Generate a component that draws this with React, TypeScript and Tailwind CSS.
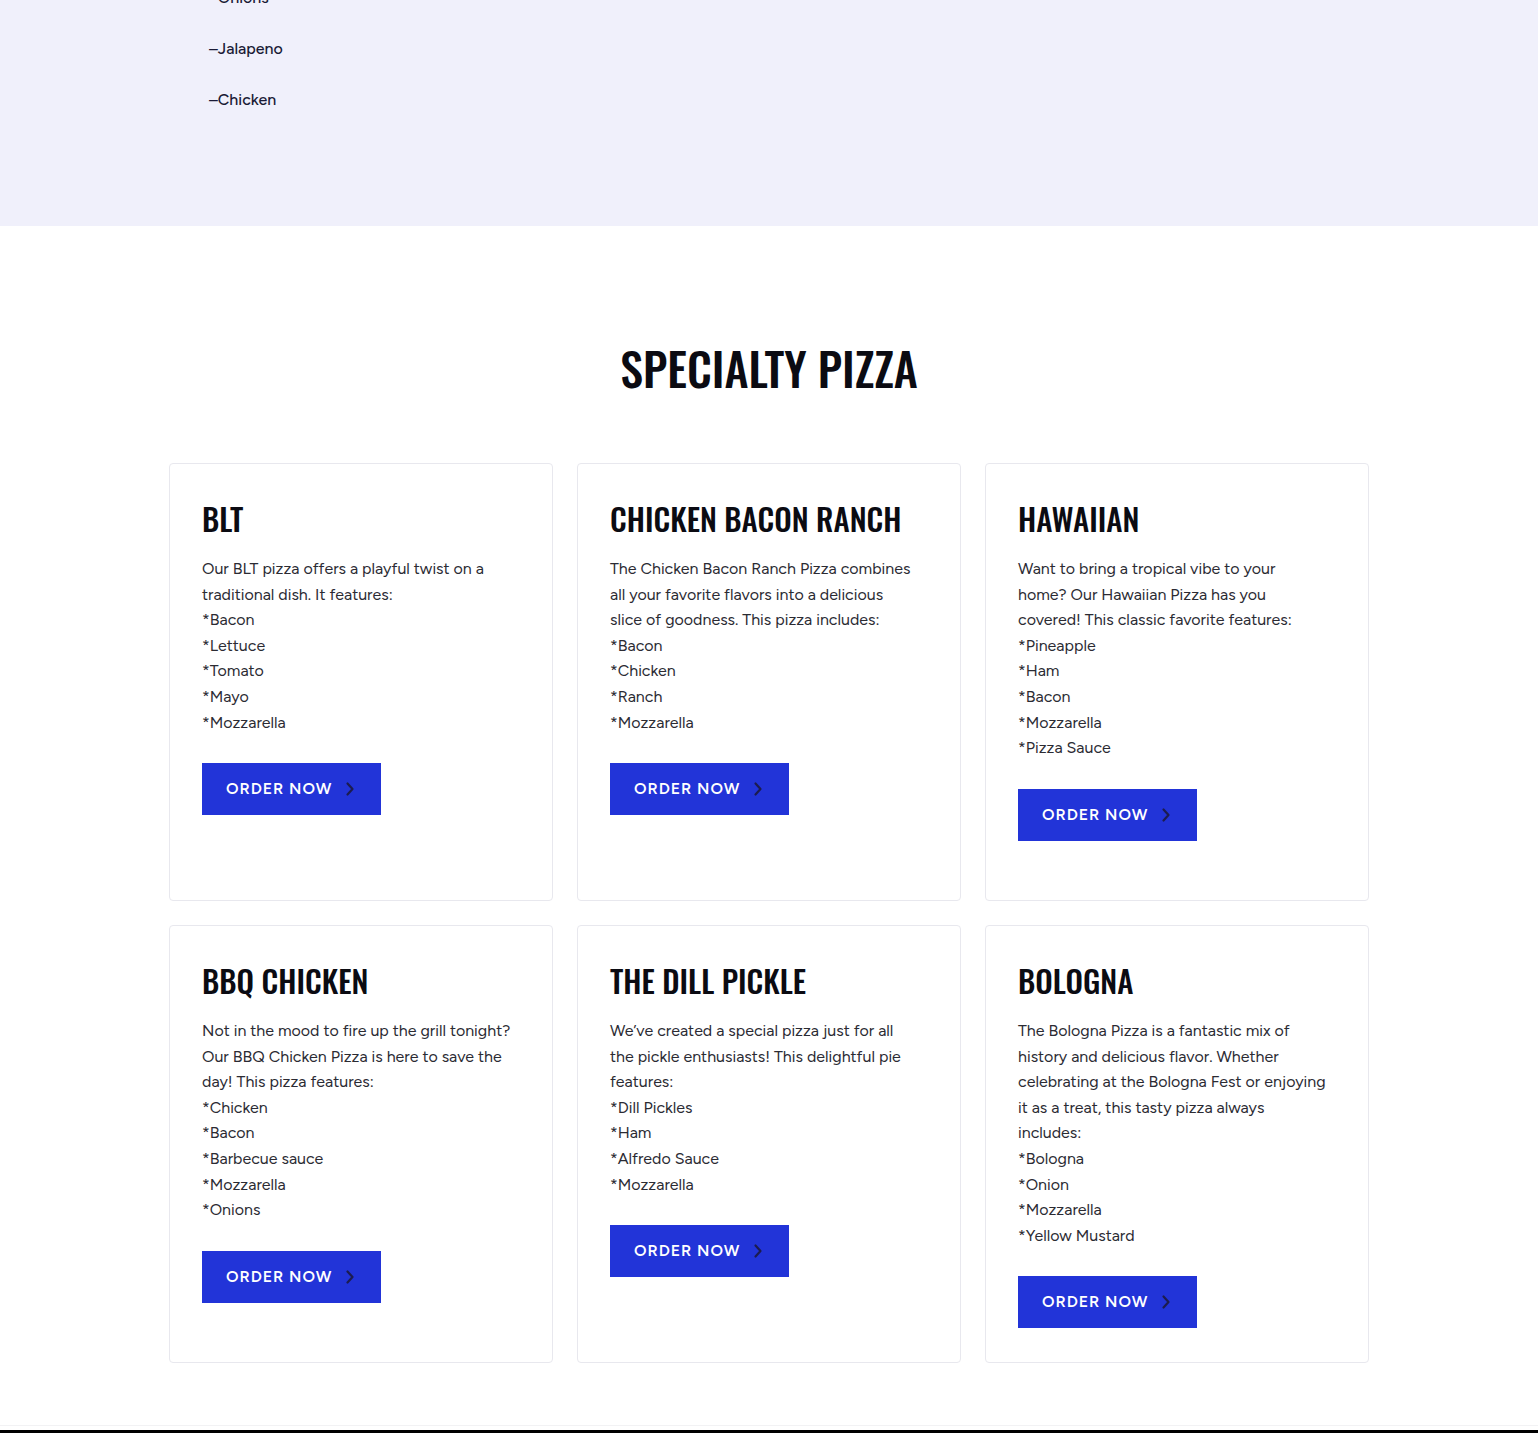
import React from "react";

const body = "font-['Figtree','Lato','Open_Sans','Noto_Sans',sans-serif]";
const head = "font-['Oswald','Liberation_Sans_Narrow','DejaVu_Sans_Condensed','Liberation_Sans',sans-serif]";

type Pizza = { title: string; lines: string[] };

const pizzas: Pizza[] = [
  {
    title: "BLT",
    lines: [
      "Our BLT pizza offers a playful twist on a",
      "traditional dish. It features:",
      "*Bacon",
      "*Lettuce",
      "*Tomato",
      "*Mayo",
      "*Mozzarella",
    ],
  },
  {
    title: "CHICKEN BACON RANCH",
    lines: [
      "The Chicken Bacon Ranch Pizza combines",
      "all your favorite flavors into a delicious",
      "slice of goodness. This pizza includes:",
      "*Bacon",
      "*Chicken",
      "*Ranch",
      "*Mozzarella",
    ],
  },
  {
    title: "HAWAIIAN",
    lines: [
      "Want to bring a tropical vibe to your",
      "home? Our Hawaiian Pizza has you",
      "covered! This classic favorite features:",
      "*Pineapple",
      "*Ham",
      "*Bacon",
      "*Mozzarella",
      "*Pizza Sauce",
    ],
  },
  {
    title: "BBQ CHICKEN",
    lines: [
      "Not in the mood to fire up the grill tonight?",
      "Our BBQ Chicken Pizza is here to save the",
      "day! This pizza features:",
      "*Chicken",
      "*Bacon",
      "*Barbecue sauce",
      "*Mozzarella",
      "*Onions",
    ],
  },
  {
    title: "THE DILL PICKLE",
    lines: [
      "We\u2019ve created a special pizza just for all",
      "the pickle enthusiasts! This delightful pie",
      "features:",
      "*Dill Pickles",
      "*Ham",
      "*Alfredo Sauce",
      "*Mozzarella",
    ],
  },
  {
    title: "BOLOGNA",
    lines: [
      "The Bologna Pizza is a fantastic mix of",
      "history and delicious flavor. Whether",
      "celebrating at the Bologna Fest or enjoying",
      "it as a treat, this tasty pizza always",
      "includes:",
      "*Bologna",
      "*Onion",
      "*Mozzarella",
      "*Yellow Mustard",
    ],
  },
];

function Chevron() {
  return (
    <svg width="10" height="16" viewBox="0 0 10 16" fill="none" className="ml-[13px]">
      <path d="M2.5 2.5 L7.5 8 L2.5 13.5" stroke="#1c1c4f" strokeWidth="2.2" strokeLinecap="round" strokeLinejoin="round" />
    </svg>
  );
}

function Card({ p }: { p: Pizza }) {
  return (
    <div className="h-[438px] rounded-[4px] border border-[#e8e8ee] bg-white px-8 pt-8 pb-8">
      <h3 className={`${head} text-[31px] leading-[44px] font-medium text-[#0b0b12] whitespace-nowrap`}>{p.title}</h3>
      <p className={`${body} mt-[16px] text-[16px] leading-[25.6px] text-[#2b2b33] whitespace-nowrap`}>
        {p.lines.map((l, i) => (
          <React.Fragment key={i}>
            {l}
            {i < p.lines.length - 1 && <br />}
          </React.Fragment>
        ))}
      </p>
      <button className={`${body} mt-[28px] flex h-[52px] w-[179px] items-center pl-6 bg-[#2234d8] text-white text-[16px] font-semibold tracking-[0.06em]`}>
        ORDER NOW
        <Chevron />
      </button>
    </div>
  );
}

export default function App() {
  return (
    <div className={`${body} bg-white`}>
      <div className="h-[226px] overflow-hidden bg-[#f0f0fb]">
        <ul className="ml-[209px] -mt-[14px] flex flex-col gap-[27px] text-[16px] leading-6 font-medium text-[#1a1a35]">
          <li>–Onions</li>
          <li>–Jalapeno</li>
          <li>–Chicken</li>
        </ul>
      </div>

      <section className="pt-[109px] pb-[62px] border-b border-[#f2f2f4]">
        <h2 className={`${head} text-center text-[46px] leading-[64px] font-medium text-[#0b0b12]`}>
          SPECIALTY PIZZA
        </h2>
        <div className="mx-auto mt-[64px] grid w-[1200px] grid-cols-3 gap-6">
          {pizzas.map((p) => (
            <Card key={p.title} p={p} />
          ))}
        </div>
      </section>
      <div className="mt-[4px] h-[120px] bg-black" />
    </div>
  );
}
